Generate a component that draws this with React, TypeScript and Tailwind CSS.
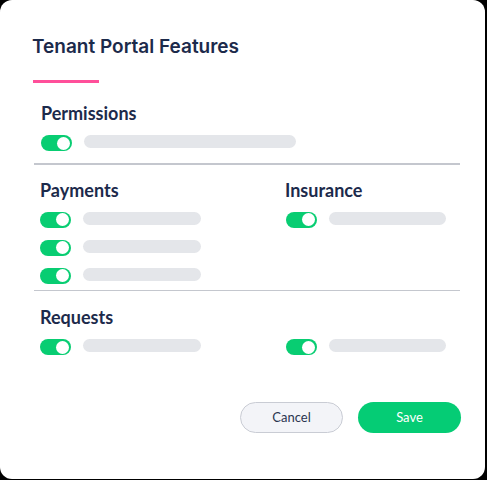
import React from "react";

function Toggle() {
  return (
    <div className="relative w-[31px] h-[16px] rounded-full bg-[#08cd72] shrink-0">
      <div className="absolute right-[2px] top-[1.5px] w-[13px] h-[13px] rounded-full bg-white" />
    </div>
  );
}

function Row({ bar }: { bar: number }) {
  return (
    <div className="flex items-start gap-[12px]">
      <Toggle />
      <div className="h-[13px] rounded-full bg-[#e4e6ea]" style={{ width: bar }} />
    </div>
  );
}

export default function App() {
  const heading = "text-[18px] leading-[20px] font-bold text-[#1c2a4b]";
  return (
    <div className="min-h-screen bg-black" style={{ fontFamily: "Lato, 'Open Sans', sans-serif" }}>
      <div className="w-[485px] h-[479px] bg-white rounded-[12px] flex flex-col overflow-hidden">
        <div
          className="mt-[35px] ml-[32px] text-[19px] leading-[24px] font-semibold text-[#1c2a4b]"
          style={{ fontFamily: "Inter, 'Open Sans', sans-serif" }}
        >
          Tenant Portal Features
        </div>
        <div className="mt-[21px] ml-[33px] w-[66px] h-[3px] bg-[#ff4f9a]" />

        <div className="ml-[34px] w-[426px] flex flex-col">
          <div className="pl-[7px] mt-[20px]">
            <div className={heading}>Permissions</div>
            <div className="mt-[12px]">
              <Row bar={212} />
            </div>
          </div>

          <div className="mt-[12px] h-[1.5px] bg-[#c4c7ce]" />

          <div className="pl-[6px] mt-[15px] grid grid-cols-[245px_1fr]">
            <div>
              <div className={heading}>Payments</div>
              <div className="mt-[12px] flex flex-col gap-[12px]">
                <Row bar={118} />
                <Row bar={118} />
                <Row bar={118} />
              </div>
            </div>
            <div>
              <div className={heading}>Insurance</div>
              <div className="mt-[12px] pl-[1px]">
                <Row bar={117} />
              </div>
            </div>
          </div>

          <div className="mt-[6px] h-[1.5px] bg-[#c4c7ce]" />

          <div className="pl-[6px] mt-[16px]">
            <div className={heading}>Requests</div>
            <div className="mt-[12px] grid grid-cols-[245px_1fr]">
              <Row bar={118} />
              <div className="pl-[1px]">
                <Row bar={117} />
              </div>
            </div>
          </div>
        </div>

        <div className="mt-[47px] mr-[24px] flex justify-end gap-[15px]">
          <button className="w-[103px] h-[31px] rounded-full bg-[#f3f4f8] border border-[#c9ccd4] text-[13px] text-[#2a3550]">
            Cancel
          </button>
          <button className="w-[103px] h-[31px] rounded-full bg-[#05cc75] text-[13px] text-white">
            Save
          </button>
        </div>
      </div>
    </div>
  );
}
